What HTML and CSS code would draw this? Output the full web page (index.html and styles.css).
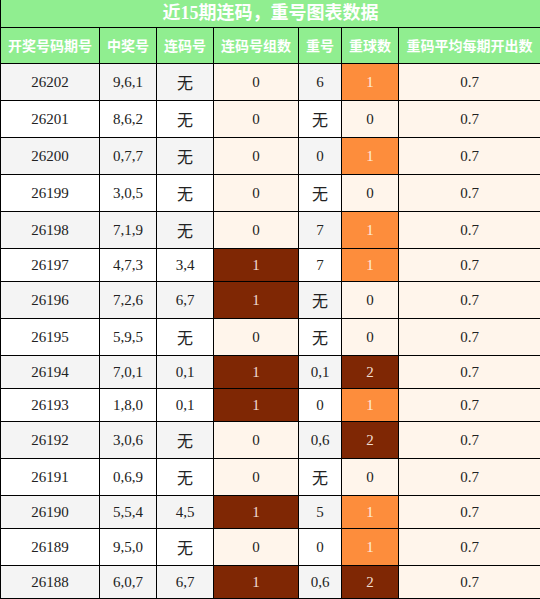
FILE: index.html
```html
<!DOCTYPE html>
<html lang="zh-CN">
<head>
  <meta charset="UTF-8">
  <title>近15期连码，重号图表数据</title>
  <link rel="stylesheet" href="styles.css">
</head>
<body>
<table class="chart">
  <colgroup>
    <col class="c-issue">
    <col class="c-draw">
    <col class="c-pair">
    <col class="c-pair-count">
    <col class="c-repeat">
    <col class="c-repeat-count">
    <col class="c-avg">
  </colgroup>
  <thead>
    <tr>
      <th class="title" colspan="7">近15期连码，重号图表数据</th>
    </tr>
    <tr class="head">
      <th>开奖号码期号</th>
      <th>中奖号</th>
      <th>连码号</th>
      <th>连码号组数</th>
      <th>重号</th>
      <th>重球数</th>
      <th>重码平均每期开出数</th>
    </tr>
  </thead>
  <tbody>
    <tr><td class="alt">26202</td><td class="alt">9,6,1</td><td class="alt none">无</td><td class="heat">0</td><td class="alt">6</td><td class="heat mid">1</td><td class="heat">0.7</td></tr>
    <tr><td class="alt">26201</td><td class="alt">8,6,2</td><td class="alt none">无</td><td class="heat">0</td><td class="alt none">无</td><td class="heat">0</td><td class="heat">0.7</td></tr>
    <tr><td class="alt">26200</td><td class="alt">0,7,7</td><td class="alt none">无</td><td class="heat">0</td><td class="alt">0</td><td class="heat mid">1</td><td class="heat">0.7</td></tr>
    <tr><td class="alt">26199</td><td class="alt">3,0,5</td><td class="alt none">无</td><td class="heat">0</td><td class="alt none">无</td><td class="heat">0</td><td class="heat">0.7</td></tr>
    <tr><td class="alt">26198</td><td class="alt">7,1,9</td><td class="alt none">无</td><td class="heat">0</td><td class="alt">7</td><td class="heat mid">1</td><td class="heat">0.7</td></tr>
    <tr><td class="alt">26197</td><td class="alt">4,7,3</td><td class="alt">3,4</td><td class="heat max">1</td><td class="alt">7</td><td class="heat mid">1</td><td class="heat">0.7</td></tr>
    <tr><td class="alt">26196</td><td class="alt">7,2,6</td><td class="alt">6,7</td><td class="heat max">1</td><td class="alt none">无</td><td class="heat">0</td><td class="heat">0.7</td></tr>
    <tr><td class="alt">26195</td><td class="alt">5,9,5</td><td class="alt none">无</td><td class="heat">0</td><td class="alt none">无</td><td class="heat">0</td><td class="heat">0.7</td></tr>
    <tr><td class="alt">26194</td><td class="alt">7,0,1</td><td class="alt">0,1</td><td class="heat max">1</td><td class="alt">0,1</td><td class="heat max">2</td><td class="heat">0.7</td></tr>
    <tr><td class="alt">26193</td><td class="alt">1,8,0</td><td class="alt">0,1</td><td class="heat max">1</td><td class="alt">0</td><td class="heat mid">1</td><td class="heat">0.7</td></tr>
    <tr><td class="alt">26192</td><td class="alt">3,0,6</td><td class="alt none">无</td><td class="heat">0</td><td class="alt">0,6</td><td class="heat max">2</td><td class="heat">0.7</td></tr>
    <tr><td class="alt">26191</td><td class="alt">0,6,9</td><td class="alt none">无</td><td class="heat">0</td><td class="alt none">无</td><td class="heat">0</td><td class="heat">0.7</td></tr>
    <tr><td class="alt">26190</td><td class="alt">5,5,4</td><td class="alt">4,5</td><td class="heat max">1</td><td class="alt">5</td><td class="heat mid">1</td><td class="heat">0.7</td></tr>
    <tr><td class="alt">26189</td><td class="alt">9,5,0</td><td class="alt none">无</td><td class="heat">0</td><td class="alt">0</td><td class="heat mid">1</td><td class="heat">0.7</td></tr>
    <tr><td class="alt">26188</td><td class="alt">6,0,7</td><td class="alt">6,7</td><td class="heat max">1</td><td class="alt">0,6</td><td class="heat max">2</td><td class="heat">0.7</td></tr>
  </tbody>
</table>
</body>
</html>
```

FILE: styles.css
```css
/* Basic styling */
body {
  margin: 0;
  background: #fff;
  font-family: "Liberation Serif", "Noto Sans CJK SC", serif;
  color: #222;
}
.chart {
  width: 540px;
  table-layout: fixed;
  border-collapse: collapse;
}
.c-issue { width: 99px; }
.c-draw { width: 57px; }
.c-pair { width: 57px; }
.c-pair-count { width: 85px; }
.c-repeat { width: 43px; }
.c-repeat-count { width: 57px; }
.c-avg { width: 142px; }
th, td {
  border: 1px solid #000;
  text-align: center;
  padding: 0;
}
/* Title and header rows */
.title {
  border-top: none;
  background: #90ee90;
  color: #fff;
  font-size: 18px;
  font-weight: bold;
  line-height: 27px;
}
.head th {
  background: #90ee90;
  color: #fff;
  font-family: "Noto Sans CJK SC", sans-serif;
  font-size: 14px;
  font-weight: bold;
  line-height: 20px;
  padding: 7px 0 8px;
}
/* Data cells */
td {
  font-size: 15px;
  line-height: 18px;
  padding: 7px 0;
}
td.none {
  font-family: "Noto Sans CJK SC", sans-serif;
  font-size: 16px;
  line-height: 22px;
}
.alt {
  background: #fff;
}
tbody tr:nth-child(odd) .alt {
  background: #f4f4f4;
}
.heat {
  background: #fff5eb;
}
.heat.mid {
  background: #fd8d3c;
  color: #fdebdc;
}
.heat.max {
  background: #7f2704;
  color: #f1ddd2;
}
```
